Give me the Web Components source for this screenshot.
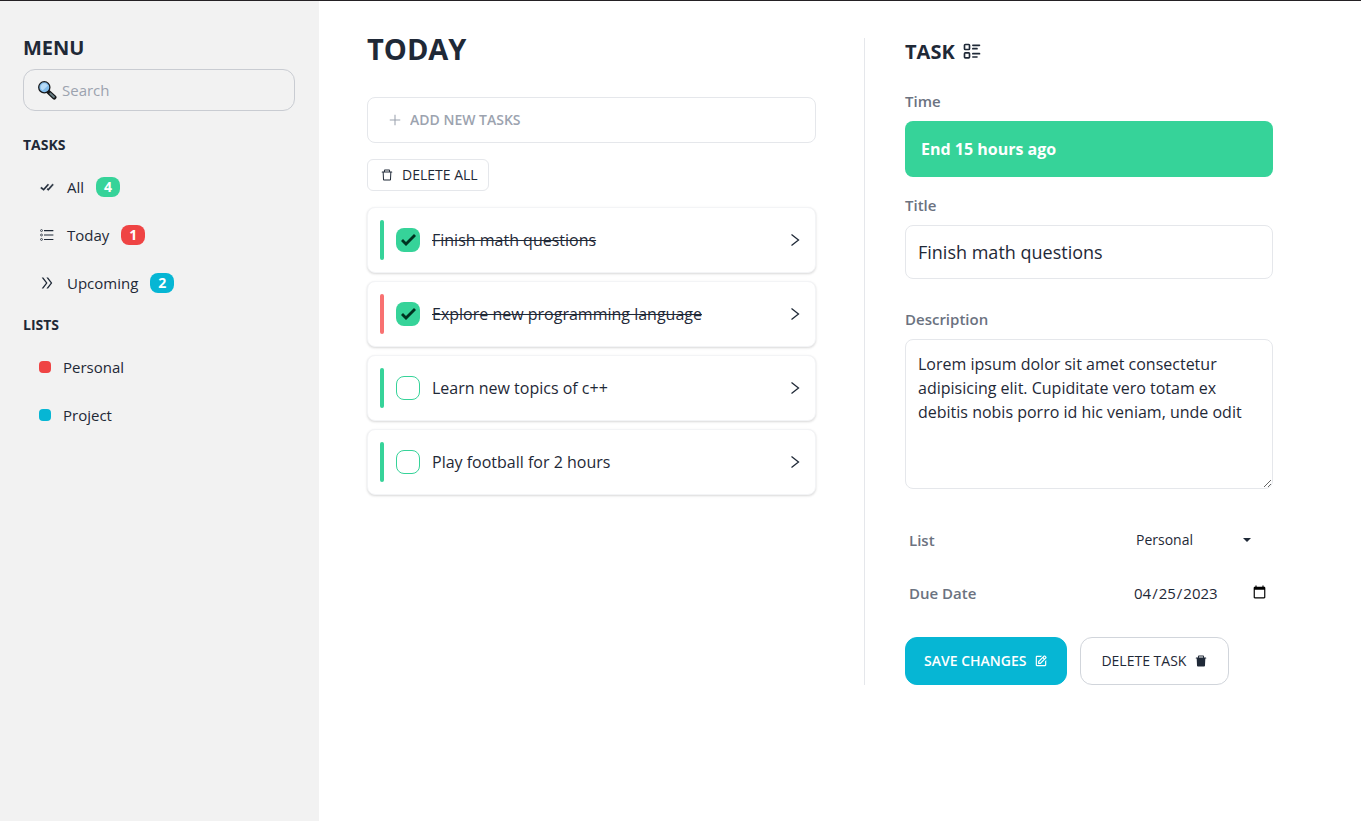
<!DOCTYPE html>
<html lang="en">
<head>
<meta charset="utf-8">
<title>Tasks</title>
<style>
  body { margin: 0; font-family: "Segoe UI", "Open Sans", "Noto Sans", sans-serif; font-size: 16px; line-height: 24px; color: #1f2937; background: #fff; }
</style>
</head>
<body>
<task-app></task-app>
<script>
const base = `*, *::before, *::after { box-sizing: border-box; } h1, h2, h3, p, ul { margin: 0; padding: 0; } ul { list-style: none; } button, input, textarea, select { font: inherit; color: inherit; margin: 0; }`;

function define(name, css, html) {
  customElements.define(name, class extends HTMLElement {
    constructor() {
      super();
      const template = document.createElement('template');
      template.innerHTML = `<style>${base}${css}</style>${html}`;
      this.attachShadow({ mode: 'open' }).append(template.content.cloneNode(true));
    }
  });
}

const icons = {
  all: ['0 0 24 24', '<path stroke="currentColor" stroke-width=".6" d="m2.394 13.742 4.743 3.62 7.616-8.704-1.506-1.316-6.384 7.296-3.257-2.486zm19.359-5.084-1.506-1.316-6.369 7.279-.753-.602-1.25 1.562 2.247 1.798z"/>'],
  list: ['0 0 1024 1024', '<path d="M912 192H328c-4.400 0-8 3.600-8 8v56c0 4.400 3.600 8 8 8h584c4.400 0 8-3.600 8-8v-56c0-4.400-3.600-8-8-8zm0 284H328c-4.400 0-8 3.600-8 8v56c0 4.400 3.600 8 8 8h584c4.400 0 8-3.600 8-8v-56c0-4.400-3.600-8-8-8zm0 284H328c-4.400 0-8 3.600-8 8v56c0 4.400 3.600 8 8 8h584c4.400 0 8-3.600 8-8v-56c0-4.400-3.600-8-8-8z"/><g fill="none" stroke="currentColor" stroke-width="50"><circle cx="160" cy="228" r="62"/><circle cx="160" cy="512" r="62"/><circle cx="160" cy="796" r="62"/></g>'],
  next: ['0 0 1024 1024', '<path d="M533.2 492.3L277.9 166.100c-3-3.900-7.700-6.100-12.600-6.100H188c-6.700 0-10.400 7.700-6.300 12.900L447.100 512 181.700 851.100A7.980 7.980 0 00188 864h77.300c4.900 0 9.600-2.300 12.600-6.100l255.300-326.100c9.100-11.700 9.100-27.900 0-39.500zm304 0L581.900 166.100c-3-3.900-7.700-6.100-12.600-6.100H492c-6.700 0-10.400 7.700-6.300 12.900L751.100 512 485.700 851.100A7.980 7.980 0 00492 864h77.300c4.900 0 9.600-2.300 12.600-6.100l255.300-326.100c9.100-11.700 9.100-27.900 0-39.500z"/>'],
  search: ['0 0 20 20', '<path d="M11.500 12 17.300 17.300" stroke="#17181a" stroke-width="4.400" stroke-linecap="round"/><path d="M13.200 13.500 17 17" stroke="#697f86" stroke-width="1.800" stroke-linecap="round"/><circle cx="7.300" cy="7.300" r="5.600" fill="#83bdec" stroke="#17181a" stroke-width="1.300"/><path d="M3.700 8.500A4 4 0 0 1 8.500 3.500L11 5.500 5.500 10.500Z" fill="#b8dcf8"/>'],
  plus: ['0 0 16 16', '<path d="M8 2v12M2 8h12" stroke="currentColor" stroke-width="1.200"/>'],
  trash: ['0 0 1024 1024', '<path d="M360 184h-8c4.400 0 8-3.600 8-8v8h304v-8c0 4.400 3.600 8 8 8h-8v72h72v-80c0-35.300-28.700-64-64-64H352c-35.300 0-64 28.700-64 64v80h72v-72zm504 72H160c-17.700 0-32 14.300-32 32v32c0 4.400 3.600 8 8 8h60.400l24.700 523c1.600 34.100 29.800 61 63.900 61h454c34.200 0 62.300-26.800 63.900-61l24.700-523H888c4.400 0 8-3.600 8-8v-32c0-17.700-14.300-32-32-32zM731.300 840H292.700l-24.200-512h487l-24.200 512z"/>'],
  trashfull: ['0 0 1024 1024', '<path d="M864 256H736v-80c0-35.300-28.700-64-64-64H352c-35.300 0-64 28.700-64 64v80H160c-17.700 0-32 14.300-32 32v32c0 4.400 3.600 8 8 8h60.400l24.700 523c1.600 34.100 29.800 61 63.900 61h454c34.200 0 62.300-26.800 63.900-61l24.700-523H888c4.400 0 8-3.600 8-8v-32c0-17.700-14.300-32-32-32zm-200 0H360v-72h304v72z"/>'],
  edit: ['0 0 24 24', '<path d="m7 17.013 4.413-.015 9.632-9.540c.378-.378.586-.880.586-1.414s-.208-1.036-.586-1.414l-1.586-1.586c-.756-.756-2.075-.752-2.825-.003L7 12.583v4.430zM18.045 4.458l1.589 1.583-1.597 1.582-1.586-1.585 1.594-1.580zM9 13.417l6.030-5.973 1.586 1.586-6.029 5.971L9 15.006v-1.589z"/><path d="M5 21h14c1.103 0 2-.897 2-2v-8.668l-2 2V19H5V5h6.847l2-2H5c-1.103 0-2 .897-2 2v14c0 1.103.897 2 2 2z"/>'],
  details: ['0 0 24 24', '<g fill="none" stroke="currentColor" stroke-width="2" stroke-linecap="round"><path d="M13 4h8M13 8h5M13 14h8M13 18h5"/><rect x="3" y="3" width="6" height="6" rx="1"/><rect x="3" y="13" width="6" height="6" rx="1"/></g>'],
  chevron: ['0 0 16 16', '<path d="m4.500 2.500 7 5.500-7 5.500" fill="none" stroke="currentColor" stroke-width="1.300"/>'],
  caret: ['0 0 8 4', '<path d="M0 0h8L4 4z"/>']
};

customElements.define('ui-icon', class extends HTMLElement {
  constructor() {
    super();
    this.attachShadow({ mode: 'open' });
  }
  connectedCallback() {
    const [box, shape] = icons[this.getAttribute('name')];
    this.shadowRoot.innerHTML = `<style>:host { display: block; flex: none; width: 16px; height: 16px; } svg { display: block; width: 100%; height: 100%; }</style><svg viewBox="${box}" fill="currentColor" aria-hidden="true">${shape}</svg>`;
  }
});

define('count-badge', `
  :host { display: block; min-width: 20px; padding: 0 8px; border-radius: 8px; background: var(--tone); color: #fff; font-size: 14px; line-height: 20px; font-weight: 700; }
`, `<slot></slot>`);

define('nav-link', `
  :host { display: block; }
  a { display: flex; align-items: center; gap: 12px; height: 40px; padding: 0 16px; color: inherit; text-decoration: none; font-size: 15px; }
`, `<a href="#"><slot name="mark"></slot><span><slot></slot></span><slot name="badge"></slot></a>`);

define('side-menu', `
  :host { display: flex; flex-direction: column; gap: 12px; padding: 33px 24px 24px 23px; background: #f2f2f2; }
  h2 { font-size: 20px; line-height: 28px; font-weight: 700; }
  h3 { font-size: 14px; line-height: 20px; font-weight: 700; }
  header { display: flex; flex-direction: column; gap: 7px; padding-bottom: 12px; }
  .search { display: flex; align-items: center; gap: 5px; height: 42px; padding: 0 12px 0 13px; border: 1px solid #c9ccd2; border-radius: 12px; }
  .search ui-icon { width: 20px; height: 20px; }
  input { flex: 1; min-width: 0; padding: 0; border: 0; outline: 0; background: none; font-size: 15px; }
  input::placeholder { color: #9ca3af; opacity: 1; }
  nav { display: flex; flex-direction: column; gap: 8px; }
  .dot { width: 12px; height: 12px; border-radius: 4px; background: var(--tone); }
`, `
  <header>
    <h2>MENU</h2>
    <label class="search"><ui-icon name="search"></ui-icon><input type="text" placeholder="Search" aria-label="Search"></label>
  </header>
  <h3>TASKS</h3>
  <nav aria-label="Tasks">
    <nav-link><ui-icon slot="mark" name="all"></ui-icon>All<count-badge slot="badge" style="--tone:#36d399">4</count-badge></nav-link>
    <nav-link><ui-icon slot="mark" name="list"></ui-icon>Today<count-badge slot="badge" style="--tone:#ef4444">1</count-badge></nav-link>
    <nav-link><ui-icon slot="mark" name="next"></ui-icon>Upcoming<count-badge slot="badge" style="--tone:#06b6d4">2</count-badge></nav-link>
  </nav>
  <h3>LISTS</h3>
  <nav aria-label="Lists">
    <nav-link><span slot="mark" class="dot" style="--tone:#ef4444"></span>Personal</nav-link>
    <nav-link><span slot="mark" class="dot" style="--tone:#06b6d4"></span>Project</nav-link>
  </nav>
`);

define('task-card', `
  :host { display: flex; align-items: center; gap: 12px; padding: 12px; border: 1px solid #f3f4f6; border-radius: 8px; background: #fff; box-shadow: 0 1px 3px rgba(0,0,0,.1), 0 1px 2px rgba(0,0,0,.06); --tone: #36d399; }
  :host([late]) { --tone: #f87171; }
  .bar { width: 4px; height: 40px; border-radius: 2px; background: var(--tone); }
  label { flex: 1; display: flex; align-items: center; gap: 12px; font-weight: 500; }
  input { appearance: none; flex: none; width: 24px; height: 24px; border: 1px solid #36d399; border-radius: 8px; background: #fff; }
  input:checked { border: 0; background: #36d399; }
  input:checked::before { content: ""; display: block; width: 24px; height: 24px; background: #003320; clip-path: polygon(5px 13px, 7px 11px, 10px 14px, 18px 6px, 20px 8px, 10px 18px); }
  input:checked + span { text-decoration: line-through; }
  button { display: block; padding: 0; border: 0; background: none; }
`, `<span class="bar"></span><label><input type="checkbox"><span><slot></slot></span></label><button aria-label="Open task"><ui-icon name="chevron"></ui-icon></button>`);

define('task-list', `
  :host { display: flex; flex-direction: column; align-items: stretch; gap: 16px; padding-top: 30px; }
  h1 { font-size: 29px; line-height: 36px; font-weight: 700; padding-bottom: 14px; }
  .add { display: flex; align-items: center; gap: 8px; height: 46px; padding: 0 20px; border: 1px solid #e5e7eb; border-radius: 8px; color: #9ca3af; font-size: 14px; font-weight: 600; }
  .add ui-icon { width: 14px; height: 14px; }
  .add input { flex: 1; min-width: 0; padding: 0; border: 0; outline: 0; background: none; }
  .add input::placeholder { color: #9ca3af; opacity: 1; }
  .clear { align-self: flex-start; display: flex; align-items: center; gap: 8px; height: 32px; padding: 0 10px 0 12px; border: 1px solid #e5e7eb; border-radius: 6px; background: #fff; font-size: 14px; font-weight: 500; }
  .clear ui-icon { width: 14px; height: 14px; }
  .cards { display: flex; flex-direction: column; gap: 8px; }
`, `
  <h1>TODAY</h1>
  <label class="add"><ui-icon name="plus"></ui-icon><input type="text" placeholder="ADD NEW TASKS" aria-label="Add new tasks"></label>
  <button class="clear"><ui-icon name="trash"></ui-icon>DELETE ALL</button>
  <div class="cards">
    <task-card done>Finish math questions</task-card>
    <task-card done late>Explore new programming language</task-card>
    <task-card>Learn new topics of c++</task-card>
    <task-card>Play football for 2 hours</task-card>
  </div>
`);

define('task-detail', `
  :host { display: block; align-self: start; margin-top: 37px; padding: 0 40px; border-left: 1px solid #e5e7eb; }
  h2 { display: flex; align-items: center; gap: 7px; font-size: 20px; line-height: 28px; font-weight: 700; }
  h2 ui-icon { width: 20px; height: 20px; }
  form { display: flex; flex-direction: column; gap: 16px; padding-top: 23px; }
  .field { display: flex; flex-direction: column; gap: 8px; }
  .field.roomy { padding-bottom: 12px; }
  .field.last { padding-bottom: 16px; }
  label, .caption { color: #6b7280; font-size: 15px; font-weight: 600; }
  .status { padding: 16px; border-radius: 8px; background: #36d399; color: #fff; font-weight: 700; }
  .field input, textarea { display: block; width: 100%; padding: 12px; border: 1px solid #e5e7eb; border-radius: 8px; outline: 0; background: #fff; font-weight: 500; }
  .field input { height: 54px; font-size: 18px; }
  textarea { height: 150px; resize: vertical; overflow: hidden; }
  .row { display: grid; grid-template-columns: 1fr 136px; align-items: center; height: 37px; padding: 0 4px; }
  .pick { display: flex; align-items: center; }
  select { appearance: none; width: 110px; padding: 0 3px; border: 0; background: none; font-size: 14px; font-weight: 500; }
  .pick ui-icon { width: 8px; height: 4px; }
  .row input { width: 100%; padding: 0; border: 0; background: none; font-size: 15px; }
  .actions { display: flex; gap: 13px; padding-top: 10px; }
  button { display: flex; align-items: center; justify-content: center; gap: 8px; height: 48px; padding: 0 20px; border: 1px solid #d1d5db; border-radius: 12px; background: #fff; font-size: 14px; font-weight: 500; white-space: nowrap; }
  button ui-icon { width: 14px; height: 14px; }
  .save { padding: 0 18px; border-color: #06b6d4; background: #06b6d4; color: #fff; font-weight: 600; }
`, `
  <h2>TASK <ui-icon name="details"></ui-icon></h2>
  <form>
    <div class="field"><span class="caption">Time</span><p class="status">End 15 hours ago</p></div>
    <div class="field roomy"><label for="title">Title</label><input id="title" type="text" value="Finish math questions"></div>
    <div class="field last"><label for="text">Description</label><textarea id="text">Lorem ipsum dolor sit amet consectetur adipisicing elit. Cupiditate vero totam ex debitis nobis porro id hic veniam, unde odit</textarea></div>
    <div class="row"><label for="list">List</label><span class="pick"><select id="list"><option>Personal</option><option>Project</option></select><ui-icon name="caret"></ui-icon></span></div>
    <div class="row"><label for="due">Due Date</label><input id="due" type="date" value="2023-04-25"></div>
    <div class="actions">
      <button type="button" class="save">SAVE CHANGES <ui-icon name="edit"></ui-icon></button>
      <button type="button">DELETE TASK <ui-icon name="trashfull"></ui-icon></button>
    </div>
  </form>
`);

define('task-app', `
  :host { box-sizing: border-box; display: grid; grid-template-columns: 319px minmax(0, 1fr); min-height: 100vh; border-top: 1px solid #242124; }
  main { display: grid; grid-template-columns: minmax(0, 1fr) minmax(0, 1fr); gap: 48px; padding: 0 48px 24px; }
`, `<side-menu></side-menu><main><task-list></task-list><task-detail></task-detail></main>`);

// Finished tasks start with their box ticked.
for (const card of document.querySelector('task-app').shadowRoot.querySelector('task-list').shadowRoot.querySelectorAll('task-card[done]')) {
  card.shadowRoot.querySelector('input').checked = true;
}
</script>
</body>
</html>
